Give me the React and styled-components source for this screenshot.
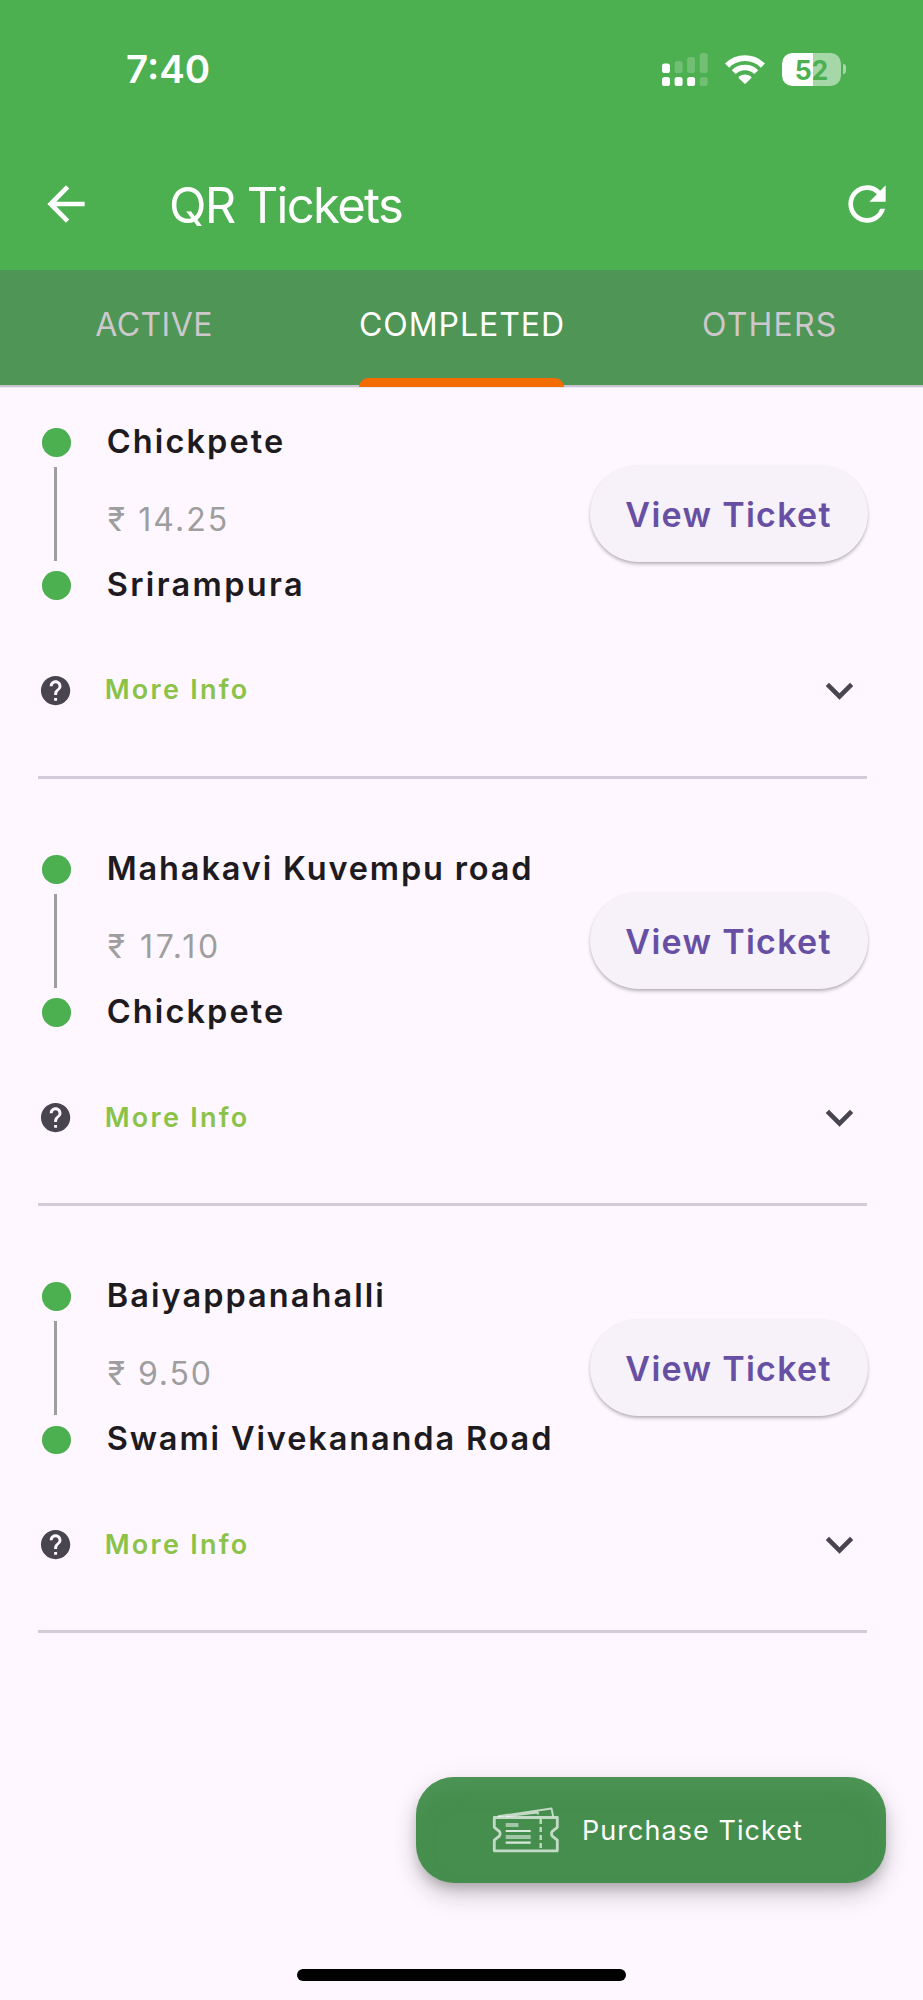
import React from 'react'
import styled, { createGlobalStyle } from 'styled-components'

const GlobalStyle = createGlobalStyle`
  * {
    box-sizing: border-box;
  }
  body {
    margin: 0;
    background: #fef7ff;
    font-family: Inter, 'Liberation Sans', sans-serif;
  }
  button {
    border: none;
    padding: 0;
    background: none;
    font-family: inherit;
    cursor: pointer;
  }
  svg {
    display: block;
    flex: none;
  }
`

const Screen = styled.div`
  display: flex;
  flex-direction: column;
  width: 923px;
  height: 2000px;
  overflow: hidden;
  background: #fef7ff;
`

// header
const Header = styled.header`
  height: 270px;
  color: #fff;
  background: #4caf50;
`

const StatusBar = styled.div`
  display: flex;
  align-items: center;
  justify-content: space-between;
  height: 138px;
  padding: 0 77px 0 126px;
`

const Clock = styled.span`
  font-size: 38.5px;
  font-weight: 600;
  line-height: 48px;
`

const StatusIcons = styled.div`
  display: flex;
  align-items: center;
  gap: 17px;
`

const Battery = styled.div`
  display: flex;
  align-items: center;
  gap: 2px;
`

const BatteryBody = styled.div`
  width: 59px;
  height: 33px;
  border-radius: 10.5px;
  background: linear-gradient(to right, #fff 30.5px, rgba(255, 255, 255, 0.5) 30.5px);
  color: #4caf50;
  font-size: 26.5px;
  font-weight: 700;
  line-height: 34px;
  text-align: center;
`

const BatteryTip = styled.div`
  width: 3px;
  height: 10px;
  border-radius: 0 5px 5px 0;
  background: rgba(255, 255, 255, 0.5);
`

const AppBar = styled.div`
  display: flex;
  align-items: center;
  height: 132px;
  padding: 0 28px 0 38px;
`

const Title = styled.h1`
  flex: 1;
  margin: 4px 0 0 75px;
  font-size: 49px;
  font-weight: 400;
  letter-spacing: -1.7px;
  line-height: 60px;
`

// tabs
const TabBar = styled.nav`
  display: flex;
  height: 118px;
  background: linear-gradient(#4e9556 115px, #cac4d0 115px, #cac4d0 117px, #eee7f0 117px);
`

const Tab = styled.button`
  flex: 1;
  display: flex;
  flex-direction: column;
  align-items: center;
  height: 117px;
  padding-top: 1px;
  color: ${(p) => (p.$active ? '#fff' : '#cdc8cb')};
  font-size: 32px;
  line-height: 107px;
  letter-spacing: ${(p) => p.$track}px;
  text-indent: ${(p) => p.$track}px;
  &::after {
    content: '';
    width: 205px;
    height: 9px;
    border-radius: 9px 9px 0 0;
    background: ${(p) => (p.$active ? '#f26c00' : 'transparent')};
  }
`

// tickets
const TicketList = styled.main`
  flex: 1;
  display: flex;
  flex-direction: column;
  gap: 70px;
  padding: 33.8px 56px 0 38px;
`

const Ticket = styled.article`
  display: flex;
  flex-direction: column;
`

const Route = styled.div`
  display: flex;
  align-items: flex-start;
`

const Rail = styled.div`
  display: flex;
  flex-direction: column;
  align-items: center;
  gap: 10.3px;
  width: 28.6px;
  margin: 6.4px 0 0 4.2px;
`

const Stop = styled.div`
  width: 28.6px;
  height: 28.6px;
  border-radius: 50%;
  background: #4caf50;
`

const Track = styled.div`
  width: 2.4px;
  height: 94px;
  margin-right: 2.2px;
  background: #9e9e9e;
`

const Details = styled.div`
  flex: 1;
  display: flex;
  flex-direction: column;
  margin-left: 36px;
`

const Station = styled.div`
  color: #1d1b20;
  font-size: 32.5px;
  font-weight: 600;
  line-height: 40px;
  letter-spacing: ${(p) => p.$track}px;
  white-space: nowrap;
`

const Price = styled.div`
  margin: 38px 0 24.9px 1px;
  color: #9e9e9e;
  font-size: 32px;
  line-height: 40px;
  letter-spacing: ${(p) => p.$track}px;
`

const ViewButton = styled.button`
  width: 278px;
  height: 97px;
  margin: 43.4px -0.6px 0 0;
  padding-top: 2px;
  border-radius: 49px;
  background: #f7f2fa;
  box-shadow: 0 2.4px 3.5px rgba(0, 0, 0, 0.22), 0 1px 2px rgba(0, 0, 0, 0.08);
  color: #6750a4;
  font-size: 34px;
  font-weight: 600;
  letter-spacing: 1.3px;
`

const MoreInfo = styled.div`
  display: flex;
  align-items: center;
  height: 56px;
  margin: 57.8px 0 57.4px 0;
`

const MoreLabel = styled.span`
  flex: 1;
  margin-left: 31.5px;
  color: #8bc34a;
  font-size: 27px;
  font-weight: 600;
  line-height: 36px;
  letter-spacing: 2.25px;
`

const Divider = styled.div`
  height: 3px;
  margin-right: 0.5px;
  background: #d2ccd8;
`

// bottom
const PurchaseButton = styled.button`
  display: flex;
  align-items: center;
  align-self: flex-end;
  gap: 22px;
  width: 470px;
  height: 106px;
  margin-right: 37px;
  padding-left: 76px;
  border-radius: 38px;
  background: #458e4e;
  box-shadow: inset 0 14px 24px -8px rgba(86, 156, 95, 0.6),
    0 7px 12px -2px rgba(0, 0, 0, 0.2), 0 14px 24px rgba(0, 0, 0, 0.14), 0 2px 30px rgba(0, 0, 0, 0.06);
  color: #fff;
  font-size: 27px;
  font-weight: 400;
  letter-spacing: 1.05px;
`

const HomeIndicator = styled.div`
  align-self: center;
  width: 329px;
  height: 12px;
  margin: 86px 0 19px;
  border-radius: 6px;
  background: #000;
`

const SignalIcon = () => (
  <svg width="46" height="33" viewBox="0 0 46 33" fill="#fff">
    <rect x="0" y="10.5" width="8" height="9.5" rx="2.6" />
    <g opacity="0.2">
      <rect x="12.6" y="8" width="8" height="12" rx="2.6" />
      <rect x="25.1" y="4" width="8" height="16" rx="2.6" />
      <rect x="37.7" y="0" width="8" height="20" rx="2.6" />
      <rect x="37.7" y="24" width="8" height="9" rx="2.6" />
    </g>
    <rect x="0" y="24" width="8" height="9" rx="2.6" />
    <rect x="12.6" y="24" width="8" height="9" rx="2.6" />
    <rect x="25.1" y="24" width="8" height="9" rx="2.6" />
  </svg>
)

const WifiIcon = () => (
  <svg width="40" height="29" viewBox="0 0 40 29" fill="none" stroke="#fff">
    <path d="M2.1 10.6a25.3 25.3 0 0 1 35.8 0" strokeWidth="5.8" />
    <path d="M8.7 17.2a16 16 0 0 1 22.6 0" strokeWidth="5.4" />
    <path d="M19.3 28.6l-5.4-5.4q-.7-.9.2-1.6a9.2 9.2 0 0 1 11.8 0q.9.7.2 1.6l-5.4 5.4q-.7.6-1.4 0z" fill="#fff" stroke="none" />
  </svg>
)

const BackIcon = () => (
  <svg width="56" height="56" viewBox="0 0 24 24" fill="#fff">
    <path d="M20 11H7.83l5.59-5.59L12 4l-8 8 8 8 1.41-1.41L7.83 13H20v-2z" />
  </svg>
)

const RefreshIcon = () => (
  <svg width="56" height="56" viewBox="0 0 24 24" fill="#fff">
    <path d="M17.65 6.35A7.958 7.958 0 0 0 12 4c-4.42 0-7.99 3.58-7.99 8s3.57 8 7.99 8c3.73 0 6.84-2.55 7.73-6h-2.08A5.99 5.99 0 0 1 12 18c-3.31 0-6-2.69-6-6s2.69-6 6-6c1.66 0 3.14.69 4.22 1.78L13 11h7V4l-2.35 2.35z" />
  </svg>
)

const HelpIcon = () => (
  <svg width="35.2" height="35.2" viewBox="0 0 24 24" fill="#49454f">
    <path d="M12 2C6.48 2 2 6.48 2 12s4.48 10 10 10 10-4.48 10-10S17.52 2 12 2zm1 17h-2v-2h2v2zm2.07-7.75l-.9.92C13.45 12.9 13 13.5 13 15h-2v-.5c0-1.1.45-2.1 1.17-2.83l1.24-1.26c.37-.36.59-.86.59-1.41 0-1.1-.9-2-2-2s-2 .9-2 2H8c0-2.21 1.79-4 4-4s4 1.79 4 4c0 .88-.36 1.68-.93 2.25z" />
  </svg>
)

const ExpandIcon = () => (
  <svg width="55" height="55" viewBox="0 0 24 24" fill="#49454f">
    <path d="M16.59 8.59L12 13.17 7.41 8.59 6 10l6 6 6-6z" />
  </svg>
)

const TicketIcon = () => (
  <svg width="68" height="48" viewBox="0 0 68 48" fill="none" stroke="#fff" strokeOpacity="0.68" strokeWidth="2.8" strokeLinejoin="round">
    <path d="M2.3 11.5h63v9.8l-5 4q-1.6 2.4 0 4.8l5 4v10.7h-63V34.1l5-4q1.6-2.4 0-4.8l-5-4z" />
    <path d="M6 10.3L59.5 2.5l1.6 7.8M14 10.3l31.5-3.8M45.3 5l1 3.5" strokeWidth="1.9" />
    <path d="M48.7 13v31" strokeWidth="2.4" strokeDasharray="5 3" />
    <path d="M13.7 19h12.8M13.7 31h25" strokeWidth="3.8" strokeOpacity="0.5" />
    <path d="M13.7 25h25M13.7 36.7h25" strokeWidth="2.2" strokeOpacity="0.8" />
  </svg>
)

const tabs = [
  { label: 'ACTIVE', track: 0.45 },
  { label: 'COMPLETED', track: 0.95 },
  { label: 'OTHERS', track: 1.2 },
]

// tracks: letter spacing of from, price, to
const tickets = [
  { from: 'Chickpete', to: 'Srirampura', price: '14.25', tracks: [2.1, 2.05, 2.33] },
  { from: 'Mahakavi Kuvempu road', to: 'Chickpete', price: '17.10', tracks: [1.85, 2.9, 2.1] },
  { from: 'Baiyappanahalli', to: 'Swami Vivekananda Road', price: '9.50', tracks: [2.05, 1.9, 1.87] },
]

function TicketCard({ ticket }) {
  return (
    <Ticket>
      <Route>
        <Rail>
          <Stop />
          <Track />
          <Stop />
        </Rail>
        <Details>
          <Station $track={ticket.tracks[0]}>{ticket.from}</Station>
          <Price $track={ticket.tracks[1]}>₹ {ticket.price}</Price>
          <Station $track={ticket.tracks[2]}>{ticket.to}</Station>
        </Details>
        <ViewButton>View Ticket</ViewButton>
      </Route>
      <MoreInfo>
        <HelpIcon />
        <MoreLabel>More Info</MoreLabel>
        <ExpandIcon />
      </MoreInfo>
      <Divider />
    </Ticket>
  )
}

function App() {
  return (
    <Screen>
      <GlobalStyle />
      <Header>
        <StatusBar>
          <Clock>7:40</Clock>
          <StatusIcons>
            <SignalIcon />
            <WifiIcon />
            <Battery>
              <BatteryBody>52</BatteryBody>
              <BatteryTip />
            </Battery>
          </StatusIcons>
        </StatusBar>
        <AppBar>
          <BackIcon />
          <Title>QR Tickets</Title>
          <RefreshIcon />
        </AppBar>
      </Header>
      <TabBar>
        {tabs.map((tab) => (
          <Tab key={tab.label} $track={tab.track} $active={tab.label === 'COMPLETED'}>
            {tab.label}
          </Tab>
        ))}
      </TabBar>
      <TicketList>
        {tickets.map((ticket) => (
          <TicketCard key={ticket.from} ticket={ticket} />
        ))}
      </TicketList>
      <PurchaseButton>
        <TicketIcon />
        Purchase Ticket
      </PurchaseButton>
      <HomeIndicator />
    </Screen>
  )
}

export default App
